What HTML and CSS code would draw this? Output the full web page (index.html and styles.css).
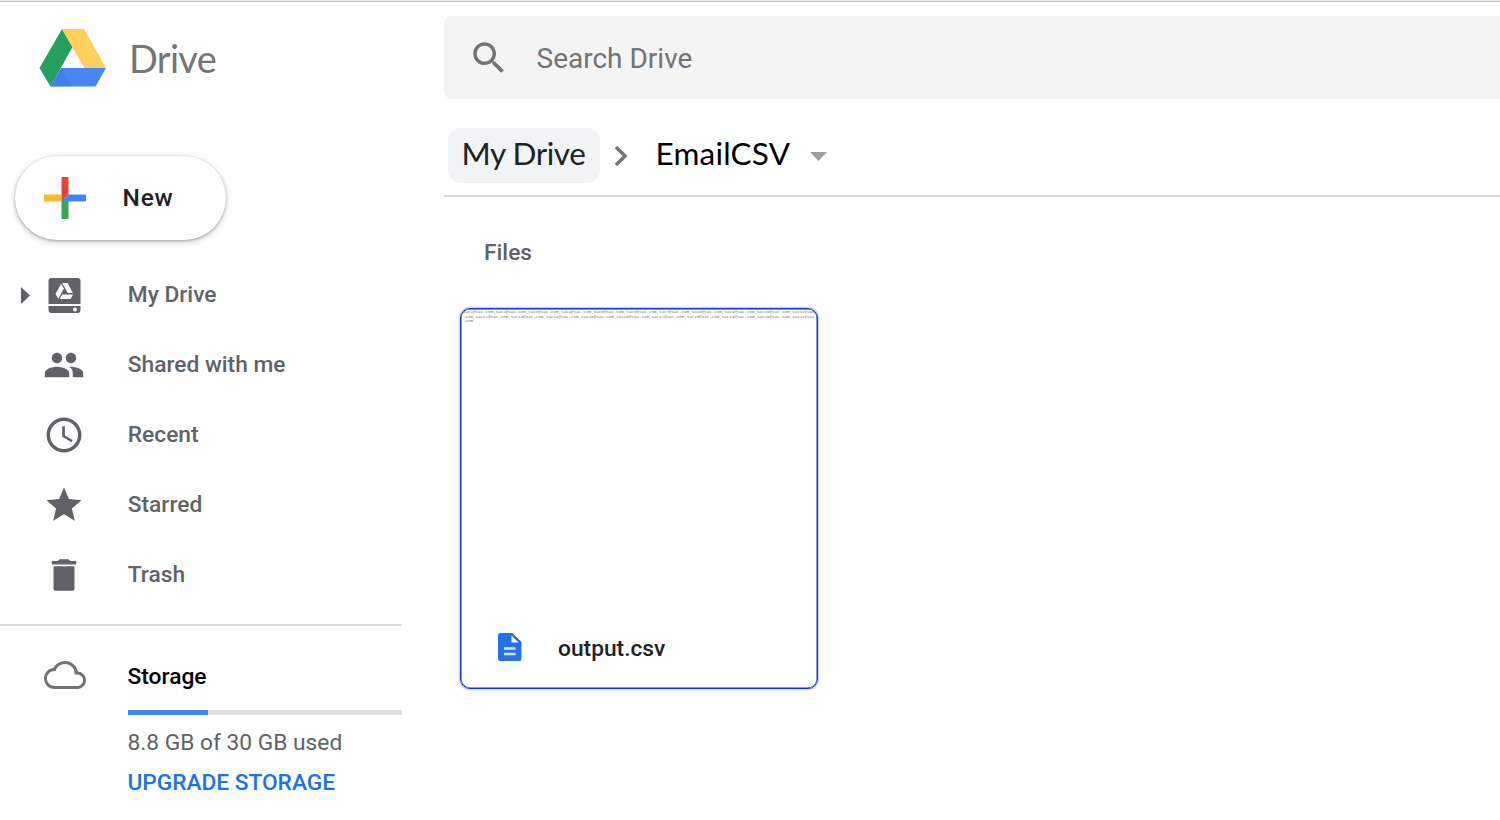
FILE: index.html
```html
<!DOCTYPE html>
<html lang="en">
<head>
<meta charset="utf-8">
<title>EmailCSV - Drive</title>
<link rel="stylesheet" href="styles.css">
</head>
<body>
<div class="app">
  <aside class="sidebar">
    <div class="brand">
      <svg class="brand-logo" viewBox="0 0 68 60" width="68" height="60">
        <path fill="#24a05e" d="M23 1 33.5 19 11.5 58.5 0.5 40Z"/>
        <path fill="#fecf5a" d="M23 1H45L67 40H45.5Z"/>
        <path fill="#4687f4" d="M22 40H67L56.5 58.5H11.5Z"/>
        <path fill="#3c78dc" d="M22 40 33 58.5H11.5Z" opacity=".45"/>
      </svg>
      <span class="brand-name">Drive</span>
    </div>
    <button class="new-button">
      <svg width="42" height="42" viewBox="0 0 42 42">
        <path fill="#fabb2d" d="M0 17.5H17.5V24.5H0Z"/>
        <path fill="#34a853" d="M17.5 24.5 21 21l3.5 3.5V42h-7Z"/>
        <path fill="#ea4335" d="M17.5 0h7v17.5l-7 7Z"/>
        <path fill="#4285f4" d="M24.5 17.5H42v7H17.5Z"/>
      </svg>
      <span class="new-label">New</span>
    </button>
    <nav class="nav">
      <a class="nav-item">
        <svg class="expander" width="9" height="17" viewBox="0 0 9 17"><path d="M0 0 9 8.5 0 17Z"/></svg>
        <svg class="icon" viewBox="0 0 42 42">
          <path d="M8.500 4h26a3 3 0 0 1 3 3v23h-32V7a3 3 0 0 1 3-3ZM5.500 32h32v4a3 3 0 0 1-3 3h-26a3 3 0 0 1-3-3Z"/>
          <circle cx="32" cy="35.400" r="2" fill="#fff"/>
          <path fill="#fff" d="M18.100 9.700 20.900 14.600 15.300 24.700 12.500 20ZM19.300 9h5.300l5.300 10h-5.200ZM19.200 20.400h10.900L27.500 25H16.600Z"/>
        </svg>
        <span class="nav-label">My Drive</span>
      </a>
      <a class="nav-item">
        <svg class="icon" viewBox="0 0 24 24"><path d="M16 11c1.660 0 2.990-1.340 2.990-3S17.660 5 16 5s-3 1.340-3 3 1.340 3 3 3zm-8 0c1.660 0 2.990-1.340 2.990-3S9.660 5 8 5 5 6.340 5 8s1.340 3 3 3zm0 2c-2.330 0-7 1.170-7 3.500V19h14v-2.500c0-2.330-4.670-3.500-7-3.500zm8 0c-.29 0-.62.020-.97.050 1.160.84 1.970 1.970 1.970 3.450V19h6v-2.500c0-2.330-4.670-3.500-7-3.500z"/></svg>
        <span class="nav-label">Shared with me</span>
      </a>
      <a class="nav-item">
        <svg class="icon" viewBox="0 0 24 24"><path d="M11.990 2C6.470 2 2 6.480 2 12s4.470 10 9.990 10C17.520 22 22 17.520 22 12S17.520 2 11.990 2zM12 20c-4.420 0-8-3.580-8-8s3.580-8 8-8 8 3.580 8 8-3.580 8-8 8zm.5-13H11v6l5.250 3.150.75-1.230-4.500-2.670z"/></svg>
        <span class="nav-label">Recent</span>
      </a>
      <a class="nav-item">
        <svg class="icon" viewBox="0 0 24 24"><path d="M12 17.270 18.180 21l-1.640-7.030L22 9.240l-7.190-.61L12 2 9.190 8.630 2 9.240l5.460 4.730L5.820 21z"/></svg>
        <span class="nav-label">Starred</span>
      </a>
      <a class="nav-item">
        <svg class="icon" viewBox="0 0 24 24"><path d="M6 19.500c0 1.100.5 1.500 1.300 1.500h9.400c.8 0 1.300-.4 1.300-1.500V7H6v12.500zM19 4h-3.500l-1-1h-5l-1 1H5v2h14V4z"/></svg>
        <span class="nav-label">Trash</span>
      </a>
    </nav>
    <section class="storage">
      <svg class="cloud" viewBox="0 0 24 24"><path d="M19.350 10.040C18.670 6.590 15.640 4 12 4 9.110 4 6.600 5.640 5.350 8.040 2.340 8.360 0 10.910 0 14c0 3.310 2.690 6 6 6h13c2.760 0 5-2.240 5-5 0-2.640-2.050-4.780-4.650-4.960zM19 18.300H6c-2.370 0-4.300-1.930-4.300-4.300s1.930-4.300 4.300-4.300h.6C7.300 7.400 9.340 5.700 12 5.700c2.900 0 5.500 2.300 5.500 5.300v.7H19c1.820 0 3.300 1.480 3.300 3.300s-1.480 3.300-3.300 3.300z"/></svg>
      <div class="storage-info">
        <div class="storage-title">Storage</div>
        <div class="meter"><div class="meter-fill" style="width:29.300%"></div></div>
        <div class="storage-used">8.8 GB of 30 GB used</div>
        <a class="upgrade">UPGRADE STORAGE</a>
      </div>
    </section>
  </aside>
  <main class="main">
    <div class="search">
      <svg class="search-icon" viewBox="0 0 24 24"><path d="M15.500 14h-.79l-.28-.27C15.410 12.590 16 11.110 16 9.500 16 5.910 13.090 3 9.500 3S3 5.910 3 9.500 5.910 16 9.500 16c1.610 0 3.090-.59 4.230-1.570l.27.28v.79l5 4.990L20.490 19l-4.990-5zm-6 0C7.010 14 5 11.990 5 9.500S7.010 5 9.500 5 14 7.010 14 9.500 11.990 14 9.500 14z"/></svg>
      <span class="search-text">Search Drive</span>
    </div>
    <div class="crumbs">
      <span class="crumb-root">My Drive</span>
      <svg class="chevron" width="14" height="22" viewBox="0 0 14 22"><path d="M2 2 11 11 2 20"/></svg>
      <span class="crumb-current">EmailCSV</span>
      <svg class="caret" width="17" height="9" viewBox="0 0 17 9"><path d="M0 0H17L8.500 9Z"/></svg>
    </div>
    <h2 class="section-title">Files</h2>
    <article class="file">
      <div class="preview">sac1@sac.com,sac2@sac.com,sac3@sac.com,sac4@sac.com,sac5@sac.com,sac6@sac.com,sac7@sac.com,sac8@sac.com,sac9@sac.com,sac10@sac.com,sac11@sac<br>.com,sac12@sac.com,sac13@sac.com,sac14@sac.com,sac15@sac.com,sac16@sac.com,sac17@sac.com,sac18@sac.com,sac19@sac.com,sac20@sac.com,sac21@sac<br>.com</div>
      <div class="file-footer">
        <svg width="24" height="28" viewBox="0 0 24 28">
          <path fill="#2274e5" d="M2.500 0H14.500L23.500 9V25.500a2.500 2.500 0 0 1-2.500 2.500H2.500A2.500 2.500 0 0 1 0 25.500V2.500A2.500 2.500 0 0 1 2.500 0Z"/>
          <path fill="#fff" d="M13.500 2.500V9.500H20.500Z"/>
          <path fill="#d5e4fb" d="M6 14.300H17.500V16.800H6ZM6 19.700H17.500V22.200H6Z"/>
        </svg>
        <span class="file-name">output.csv</span>
      </div>
    </article>
  </main>
</div>
</body>
</html>
```

FILE: styles.css
```css
* { box-sizing: border-box; }
body {
  margin: 0;
  background: #fff;
  font-family: Roboto, "Liberation Sans", sans-serif;
  color: #5f6368;
}
.app {
  display: grid;
  grid-template-columns: 402px 1fr;
  column-gap: 42px;
  height: 820px;
  overflow: hidden;
  border-top: 1px solid #ececec;
  box-shadow: inset 0 1px #c4c4c4;
}
.brand {
  display: flex;
  align-items: center;
  gap: 22px;
  height: 60px;
  margin: 27px 0 0 39px;
}
.brand-name {
  font: 400 38px/60px Lato, sans-serif;
  letter-spacing: -.7px;
  color: #757575;
}
.new-button {
  display: flex;
  align-items: center;
  gap: 37px;
  width: 211px;
  height: 84px;
  margin: 68px 0 0 15px;
  padding: 0 0 0 28.500px;
  border: 0;
  border-radius: 42px;
  background: #fff;
  box-shadow: 0 1px 3px rgba(60, 64, 67, .4), 0 2px 6px 1px rgba(60, 64, 67, .17);
}
.new-label {
  font: 500 24.500px/42px Roboto, sans-serif;
  letter-spacing: .8px;
  color: #202124;
}
.nav { margin-top: 20px; padding-bottom: 14px; border-bottom: 2px solid #dcdce0; }
.nav-item {
  position: relative;
  display: flex;
  align-items: center;
  gap: 42.500px;
  height: 70px;
  padding-left: 43.250px;
}
.expander { position: absolute; left: 21px; top: 27px; fill: #5f6368; }
.icon { width: 42px; height: 42px; fill: #5f6368; }
.nav-label { padding-bottom: 2px; }
.nav-label, .storage-title, .section-title, .file-name, .upgrade {
  font-size: 22.750px;
  font-weight: 500;
  letter-spacing: 0;
}
.storage { display: flex; gap: 42px; padding: 28px 0 0 43.500px; }
.cloud { width: 42px; height: 42px; fill: #737373; }
.storage-info { flex: 1; }
.storage-title { padding-top: 1px; line-height: 44px; color: #000; }
.meter { height: 5px; margin-top: 11px; background: #dfdfdf; }
.meter-fill { height: 100%; background: #4285f4; }
.storage-used { margin-top: 8px; font-size: 22.750px; line-height: 40px; letter-spacing: 0; }
.upgrade { line-height: 40px; letter-spacing: -.05px; color: #1a73e8; }

.search {
  display: flex;
  align-items: center;
  gap: 26.500px;
  height: 83px;
  margin-top: 15px;
  padding-left: 24px;
  border-radius: 8px 0 0 8px;
  background: #f4f4f4;
}
.search-icon { width: 42px; height: 42px; fill: #737373; }
.search-text { padding-top: 2px; font-size: 28px; color: #737373; }
.crumbs {
  display: flex;
  align-items: center;
  height: 98px;
  padding: 17px 0 0 3.500px;
  border-bottom: 2px solid #d5d8dc;
  font: 400 31.500px/51px Lato, sans-serif;
}
.crumb-root {
  width: 152px;
  height: 55px;
  padding-left: 14px;
  border-radius: 13px;
  background: #f1f3f4;
  letter-spacing: -.45px;
  color: #202124;
}
.chevron { margin-left: 14px; fill: none; stroke: #757575; stroke-width: 3.600; }
.crumb-current { margin-left: 28px; height: 55px; letter-spacing: .2px; color: #000; }
.caret { margin: 1px 0 0 20px; fill: #9aa0a6; }
.section-title { margin: 36px 0 0 40px; line-height: 40px; }
.file {
  display: flex;
  flex-direction: column;
  justify-content: space-between;
  width: 358px;
  height: 381px;
  margin: 35px 0 0 16px;
  border: 1px solid #0b36cc;
  border-radius: 10px;
  box-shadow: 0 0 0 1.500px #dadfe6, inset 0 0 0 .5px #0b36cc;
}
.preview {
  padding: 1px 0 0 2px;
  overflow: hidden;
  white-space: nowrap;
  font: 4.200px/4.700px "Liberation Mono", monospace;
  color: #777;
}
.file-footer { display: flex; align-items: center; gap: 36px; height: 82px; padding-left: 37px; }
.file-name { padding-top: 2px; color: #202124; }
```
